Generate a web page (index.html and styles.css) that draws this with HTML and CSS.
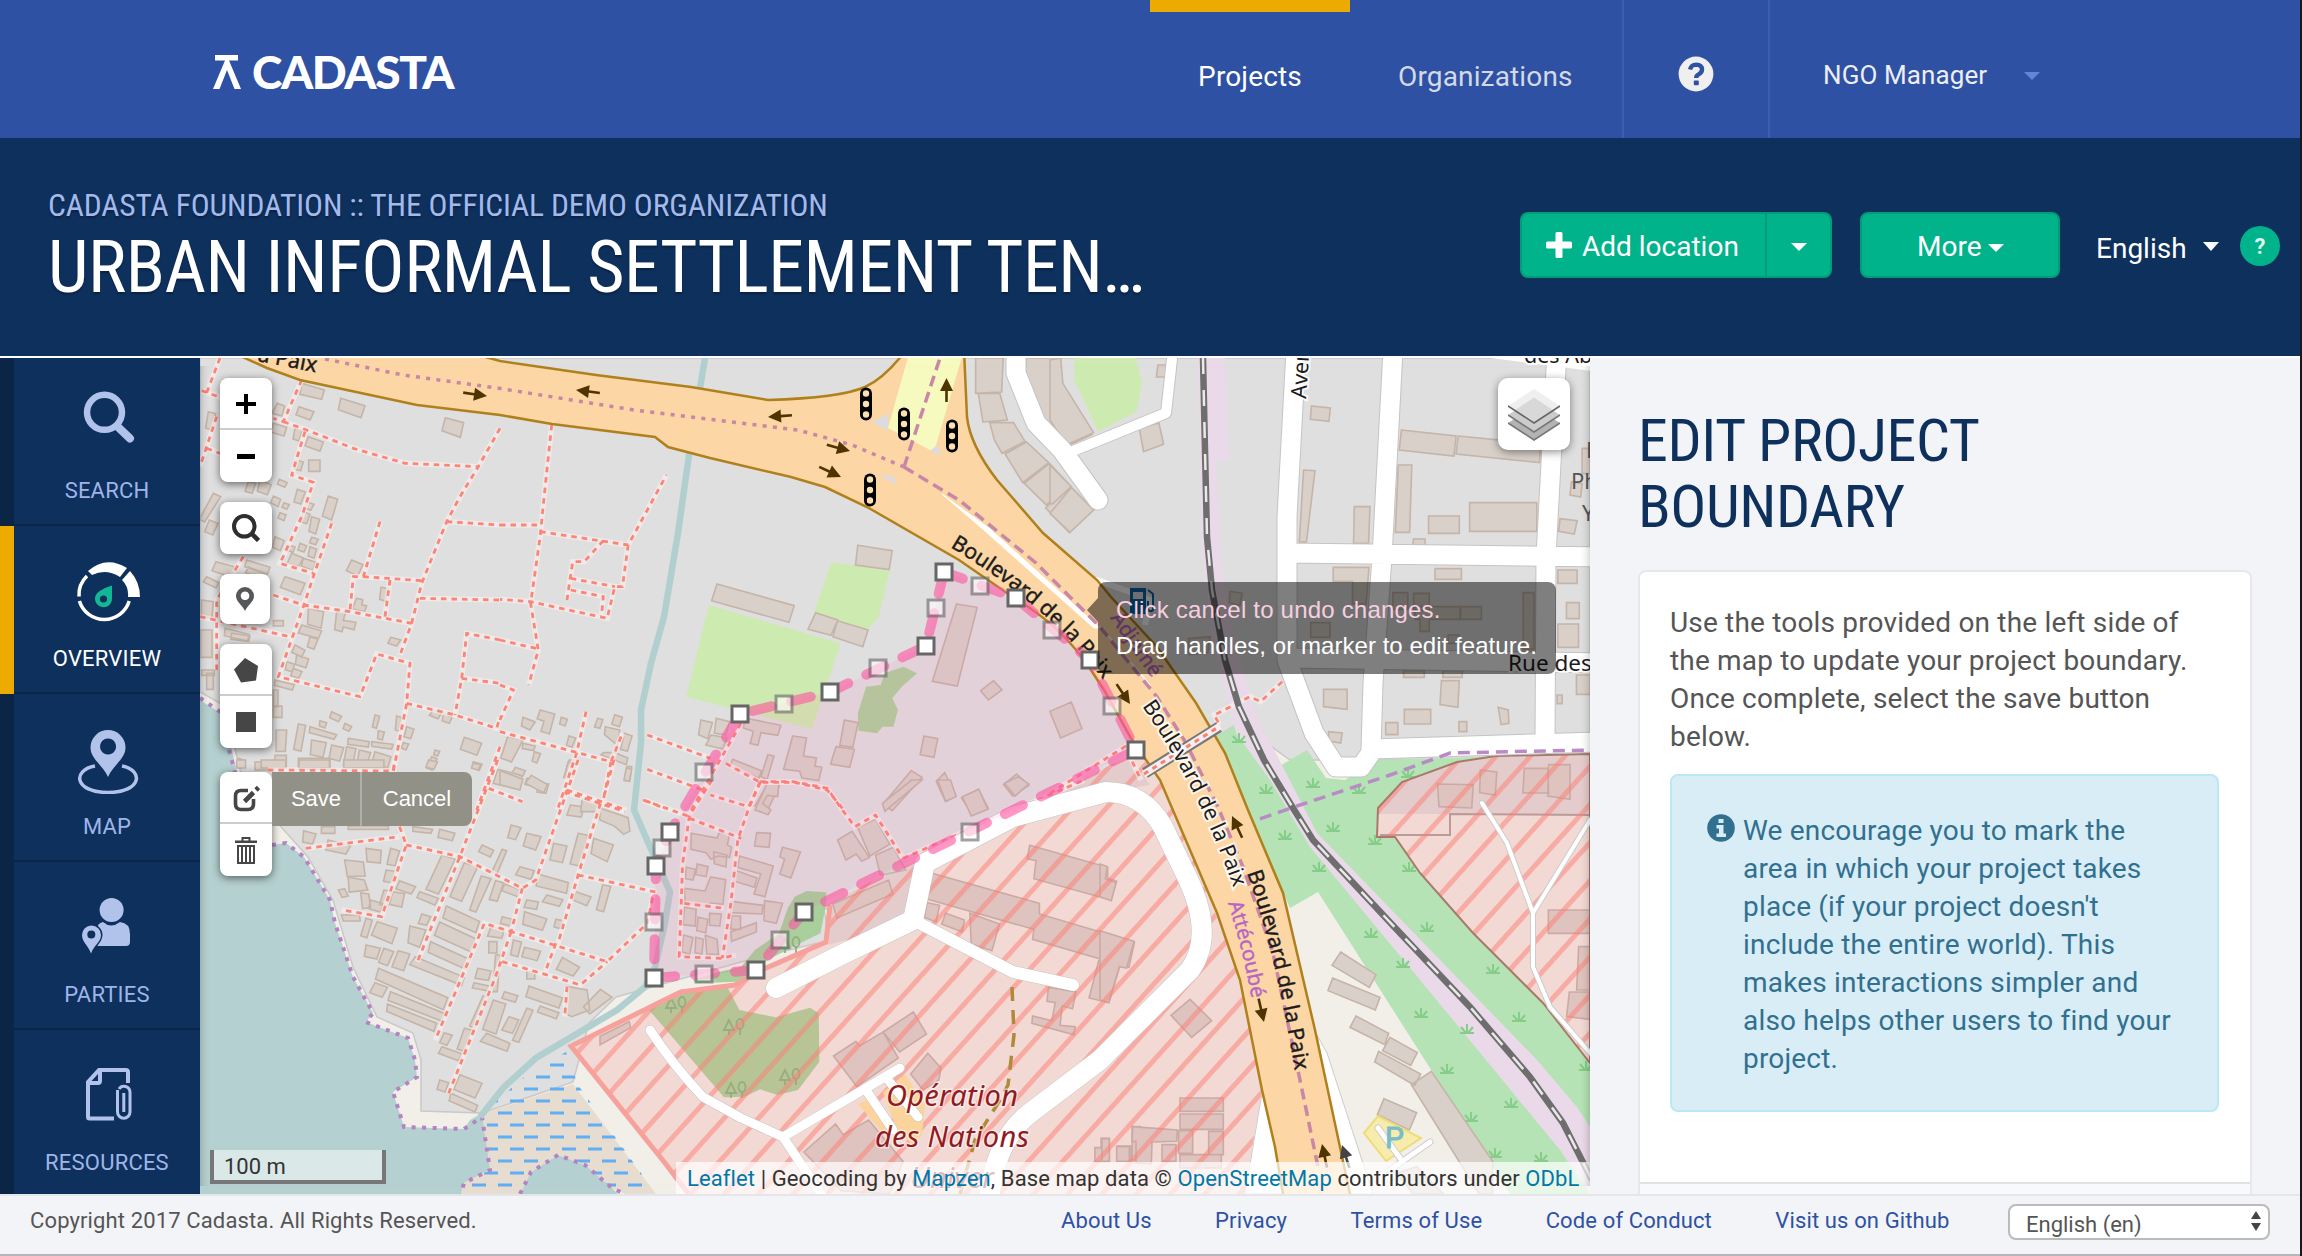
FILE: index.html
```html
<!DOCTYPE html>
<html lang="en">
<head>
<meta charset="utf-8">
<title>Cadasta – Edit project boundary</title>
<link rel="stylesheet" href="styles.css">
</head>
<body>
<div class="app">
<header class="topbar">
  <a class="logo"><svg class="logo-mark" viewBox="0 0 28 34" width="28" height="34"><path d="M2 0H25V5.4H2zM12 5.4H16L28 34H21.5L14 15 6.5 34H0z" fill="#fff"/></svg><span>CADASTA</span></a>
  <nav class="mainnav">
    <a class="tab active">Projects</a>
    <a class="tab orgs">Organizations</a>
    <a class="help"><svg viewBox="0 0 36 36" width="36" height="36"><circle cx="18" cy="18" r="17.4" fill="#efefef"/><path d="M12 13.6Q13.2 8.6 18.2 8.6 24 8.8 24 13.6 24 16.6 20.6 18.4 18.2 19.6 18.2 22" fill="none" stroke="#2e51a3" stroke-width="4.4"/><rect x="15.8" y="24.4" width="5" height="4.8" rx="1" fill="#2e51a3"/></svg></a>
    <a class="user">NGO Manager<i class="caret pale"></i></a>
  </nav>
</header>
<section class="titlebar">
  <div class="titles"><div class="org">CADASTA FOUNDATION :: THE OFFICIAL DEMO ORGANIZATION</div><h1>URBAN INFORMAL SETTLEMENT TEN…</h1></div>
  <div class="btn split"><span class="main"><svg viewBox="0 0 26 26" width="26" height="26"><path d="M9.5 1.5q0-1.5 1.5-1.500h4q1.500 0 1.500 1.500v8h8q1.500 0 1.500 1.500v4q0 1.500-1.500 1.500h-8v8q0 1.500-1.500 1.500h-4q-1.500 0-1.500-1.500v-8h-8q-1.500 0-1.500-1.500v-4q0-1.500 1.500-1.500h8z" fill="#fff"/></svg><em>Add location</em></span><span class="drop"><i class="caret"></i></span></div>
  <div class="btn more"><em>More</em><i class="caret"></i></div>
  <div class="lang">English<i class="caret"></i></div>
  <div class="qmark">?</div>
</section>
<main class="body">
  <nav class="side">
    <a class="item"><svg viewBox="0 0 70 70" width="70" height="70" fill="none" stroke="#b1c3ea"><circle cx="32.500" cy="24.300" r="17.500" stroke-width="6.500"/><path d="M45.500 38.500L58 50.500" stroke-width="8" stroke-linecap="round"/></svg><span>SEARCH</span></a>
    <a class="item on"><svg viewBox="0 0 70 70" width="70" height="70"><g fill="none" stroke="#fff" stroke-width="3.500"><path d="M57.200 45A26 26 0 0 1 7.400 45M7 40.500A26 26 0 0 1 15 20"/></g><path d="M16 15Q34-1 55 12L48 21Q34 12 20 19ZM58 15Q68 26 68 41L56 41Q57 31 50 24Z" fill="#fff"/><path d="M40 29.500V43a8.500 8.500 0 1 1-13-7.500Q34 31 40 29.500Z" fill="#12b893"/><circle cx="31.500" cy="43" r="3.600" fill="#0e305d"/></svg><span>OVERVIEW</span></a>
    <a class="item"><svg viewBox="0 0 70 70" width="70" height="70"><path fill-rule="evenodd" d="M36 53C31 41 18.500 35 18.500 23.500a17.500 17.500 0 0 1 35 0C53.500 35 41 41 36 53zM36 14.500a8 8 0 1 0 .1 0z" fill="#b1c3ea"/><path d="M23 42C0 46 2 68.500 36 68.500S72 46 50 42" fill="none" stroke="#b1c3ea" stroke-width="3.500"/></svg><span>MAP</span></a>
    <a class="item"><svg viewBox="0 0 70 70" width="70" height="70"><circle cx="39.600" cy="18" r="12" fill="#b1c3ea"/><path d="M25 54V38Q25 31 31 30Q39 37 48 30Q58 31 58 42V50Q58 54 54 54Z" fill="#b1c3ea"/><path fill-rule="evenodd" stroke="#0e305d" stroke-width="3" paint-order="stroke" d="M19 61.500C16 53 10 50 10 43a9.500 9.500 0 0 1 19 0C29 50 22 53 19 61.500z" fill="#b1c3ea"/><circle cx="19.300" cy="42.500" r="4" fill="#0e305d"/></svg><span>PARTIES</span></a>
    <a class="item"><svg viewBox="0 0 70 70" width="70" height="70" fill="none" stroke="#b1c3ea" stroke-width="4"><path d="M42 58.500H17.500Q16 58.500 16 57V22L27 10H53.500Q56 10 56 12V23M16 23H26Q28 23 28 21V10"/><path d="M45.500 30V52a5 5 0 0 0 12.500 0V32a6 6 0 0 0-11-3M51.800 33V52" stroke-width="3"/></svg><span>RESOURCES</span></a>
  </nav>
  <div class="map">
  <svg class="tiles" viewBox="200 358 1390 836" width="1390" height="836">
    <defs>
      <pattern id="hatch" width="25.500" height="25.500" patternUnits="userSpaceOnUse" patternTransform="translate(12 0) rotate(42)"><rect width="5" height="26" fill="#fb8078" opacity=".52"/></pattern>
      <pattern id="marsh" width="26" height="24" patternUnits="userSpaceOnUse" patternTransform="translate(4 6)"><path d="M0 3H14M12 15H26" stroke="#62aef2" stroke-width="2.800"/></pattern>
      <g id="signal"><rect x="-6" y="-16.500" width="12" height="33" rx="6"/><g fill="#fce0b4"><circle cy="-10.500" r="3.200"/><circle r="3.200"/><circle cy="10.500" r="3.200"/></g></g>
      <path id="arrow" d="M0 0L-13-6.500V-1.300H-24V1.300H-13V6.500Z"/>
      <path id="tuft" d="M-7 4H7M0 4V-5M-1 4L-6-2M1 4L6-2" fill="none" stroke="#86cd89" stroke-width="2"/>
      <g id="trees" fill="none" stroke="#97ac80" stroke-width="1.800"><path d="M-5 8V2M-5-7L-10 3H0ZM6 8V1"/><ellipse cx="6" cy="-3" rx="3.500" ry="5"/></g>
      <path id="b1" d="M950 547Q1050 606 1106 684"/><path id="b2" d="M1142 706Q1200 790 1235 892"/><path id="b3" d="M1247 873Q1278 960 1296 1078"/>
      <path id="b4" d="M1228 903Q1243 950 1252 1000"/><path id="b5" d="M1110 618L1153 680"/>
      <g id="paths"><g class="c3"><path d="M660 24L620 128M605 122L660 142M650 200L600 350M620 295L660 310M905 90L850 215 820 205M850 215L920 240 1060 295 1215 340 1435 350M915 245L875 375 940 397 905 500 840 640 940 670M1500 235L1435 350 1380 440 1340 515 1265 700 1235 820 1200 915M1340 515L1500 525M1140 515L1090 680 1060 680 1050 780M1090 680L1265 692M1170 690L1155 800M995 520L940 680 910 770 835 980 1080 1040 1130 912 1230 940 1220 1060 1180 1265M820 735L910 765 1050 785 1235 820M1260 745L1500 750M1500 870L1400 850 1385 985 1365 1095M1385 985L1500 1000M1220 1060L1365 1095 1490 1135 1500 1100M730 620L650 750V960M600 800L870 860M1500 1190L1430 1380"/></g>
      <g class="c4"><path d="M1115 0L1030 290 935 605M600 30L880 33 885 0M685 265L895 230M895 200L910 255 855 470 765 450M910 255L1030 290 1170 385 1200 360 1295 0M1170 385L1145 515 1085 490 975 840M1145 515L1110 650 1005 1000M1375 0L1355 100M1265 95L1400 155M1345 130L1295 345 1250 550M1295 345L1465 395 1450 490 1360 605 1145 515M1125 605L1300 675 1360 605M1245 550L1220 640M1270 680L1265 770M1095 85L1170 125"/></g>
      <g class="c5"><path d="M135 225L110 500 105 560 80 760 100 900 75 1005M0 525H105M105 545L335 585 435 375M335 585L320 710 300 710 280 805 80 755 0 748M270 572L220 635 190 635 175 750M185 685L300 710M185 720L270 740 265 800M0 870L100 897M0 1005L35 1020 0 1110M0 1145L290 1235 320 1150M225 1085L200 1210 150 1380M290 1235L270 1350M385 1155L550 1225M385 1258L530 1320M380 1352L430 1375M630 1120L500 1380M590 1240L680 1297 770 1297 855 1320 895 1375M680 1297L650 1370 550 1335M175 1320L330 1380"/></g>
      <g class="c7"><path d="M325 0L260 105 240 250 230 530 350 535 395 525M260 115L410 175M465 5L430 90 400 180 380 370 355 535M465 5L560 5 660 25 700 85 740 140 800 105 880 235M245 370L360 385M880 235L1405 0M125 60L260 110"/></g>
      <g class="c6"><path d="M0 1330L210 1190 255 1290M650 995L590 1055 560 1040 460 1095 475 1125"/></g></g>
    </defs>
    <rect x="200" y="358" width="1390" height="836" fill="#f2efe9"/>
    <path d="M200 358H1590V760H1290L1239 723 1214 738 1160 785 1127 760 824 910 830 940 741 962 652 987 616 997 589 1023 573 1082 482 1113 421 1111V1060L413 1033 377 1017 353 967 333 900 308 857 275 820 240 770 225 706 200 692Z" fill="#dfdfdf" stroke="#c9c9c9" stroke-width="1.500"/>
    <path d="M200 700L222 714 232 750 240 790 250 835 272 845 286 843 304 857 330 900 335 923 353 977 373 1013 366 1022 408 1038 415 1060 417 1077 393 1092 404 1127 464 1129 470 1120 484 1112 488 1130 490 1170 464 1183 461 1194H200Z" fill="#b5d0d0"/>
    <path d="M482 1114L573 1084 656 1194H625L612 1188 585 1165 558 1155 531 1172 520 1194H461L464 1183 490 1170Z" fill="#e6dcd0"/>
    <path d="M520 1194L531 1172 558 1155 585 1165 612 1188 618 1194Z" fill="#b5d0d0"/>
    <path d="M566 1052L578 1085 656 1194H618L585 1165 558 1152 531 1170 520 1194H461L464 1183 490 1170 486 1110 530 1072Z" fill="url(#marsh)"/>
    <path d="M200 698L222 713M229 750L240 790M272 845L286 843 304 857 330 900 335 923 353 977 373 1013 366 1022 408 1038 415 1060 417 1077 393 1092 404 1127 464 1129 482 1117 490 1170 464 1183 461 1194M520 1194L531 1172 558 1155 585 1165 612 1188 625 1194" fill="none" stroke="#b583c3" stroke-width="4" stroke-dasharray="4 6.500"/>
    <!-- scrub and rail corridor -->
    <path d="M1214 738L1239 723 1278 767 1307 750 1326 778 1345 780 1378 760 1590 754V1194H1510L1318 892 1290 908 1235 780Z" fill="#b5e3b5"/>
    <path d="M1198 358H1225L1230 460H1216L1220 550 1232 633 1257 717 1300 800 1317 833 1537 1060 1577 1107 1590 1127V1194L1560 1150 1500 1077 1420 980 1310 847 1270 780 1236 733 1211 633 1202 550Z" fill="#ead9e8"/>
    <g><use href="#tuft" x="1239" y="738"/><use href="#tuft" x="1313" y="783"/><use href="#tuft" x="1266" y="789"/><use href="#tuft" x="1359" y="789"/><use href="#tuft" x="1408" y="773"/><use href="#tuft" x="1285" y="835"/><use href="#tuft" x="1333" y="827"/><use href="#tuft" x="1375" y="840"/><use href="#tuft" x="1319" y="867"/><use href="#tuft" x="1409" y="867"/><use href="#tuft" x="1371" y="933"/><use href="#tuft" x="1427" y="927"/><use href="#tuft" x="1403" y="963"/><use href="#tuft" x="1493" y="969"/><use href="#tuft" x="1421" y="1013"/><use href="#tuft" x="1519" y="1017"/><use href="#tuft" x="1467" y="1029"/><use href="#tuft" x="1447" y="1069"/><use href="#tuft" x="1511" y="1103"/><use href="#tuft" x="1471" y="1117"/><use href="#tuft" x="1495" y="1153"/><use href="#tuft" x="1541" y="1157"/><use href="#tuft" x="1586" y="1066"/></g>
    <!-- parks -->
    <g class="c5" fill="#cdebb0"><path d="M545 765L890 880 815 1137 487 1040Z"/><path d="M865 637L1018 660 990 800 960 838 820 790Z"/><path fill="#add19e" d="M957 1010L995 1005 1005 970 1055 950 1090 970 1050 1010 1025 1045 1040 1080 1028 1130 1000 1130 985 1150 937 1142 935 1090Z"/></g>
    <path class="c6" fill="#cdebb0" d="M68 0H235L258 100 242 185 135 245 68 90Z"/>
    <!-- restricted areas -->
    <path d="M569 1045L679 990 734 983 762 967 824 940 829 903 896 868 1127 757 1132 745 1160 780 1213 907 1240 980 1262 1090 1250 1160 1245 1194H690L665 1163Z" fill="#f3d9d4"/>
    <path d="M829 903L1127 757 1140 770 1150 785 1106 792 1013 817 925 863 913 920 829 945Z" fill="#e5cccc"/>
    <path d="M1377 837L1378 808 1402 782 1457 762 1496 756 1590 754V1063L1543 1003 1473 933 1420 873 1395 837Z" fill="#f3d9d4"/>
    <path d="M1378 814V808L1402 782 1457 762 1496 756 1590 754V814Z" fill="#e5cccc"/><path d="M1380 835H1450V814L1590 815" stroke="#bb9a98" stroke-width="2" fill="none"/>
    <g class="c7"><path fill="#a8cf9c" d="M565 350L600 333 657 337 655 380 640 460 540 510 480 545 450 570 400 605 280 610 270 600 330 580 410 560 450 510 520 460 545 385Z"/><path fill="#b7c496" d="M140 687L240 628 370 622 405 690 510 712 610 683 635 700 637 845 575 930 515 945 465 928 420 950 360 952Z"/></g>
    <use href="#trees" x="676" y="1005"/><use href="#trees" x="734" y="1027"/><use href="#trees" x="790" y="1077"/><use href="#trees" x="790" y="945"/><use href="#trees" x="736" y="1090"/>
    <!-- buildings -->
    <g class="bld">
    <g class="c3"><path d="M905 100l68 20-8 28-65-15zM1022 145l73 22-12 36-68-24zM1336 203l55 15-10 44-55-20zM897 170l45 15-12 25-42-16zM832 160l22 8-8 30-30-8zM925 260l45 16-10 28-45-17zM926 330h34v34h-34zM985 438l28 10-18 62-28-12zM888 330l22 6-8 26-20-5zM820 220l40 12-8 26-40-12zM885 235l22 6-10 32-18-6zM625 185l22 6-16 48-14-5zM640 430l22 10-48 76-16-8zM628 510l26 10-16 35-24-10zM780 390l34 14-12 30-30-10zM745 395l22 5-10 30-22-6zM838 388l24 10-8 14-22-10zM820 438l22 10-8 22-22-12zM852 458l16 6-8 14-14-6zM840 488l18 6-6 18-18-8zM892 418l24 8-14 36-20-6zM918 455l24 8-10 18-16-6zM910 485l20 8-10 28-18-6zM935 500l24 8-12 44-20-8zM935 562l20 6-8 16-18-6zM900 580l20 8-8 18-18-6zM865 585l20 6-6 16-18-6zM875 610l35 14-14 26-34-10zM910 625l38 12-10 24-34-12zM930 590l20 8-8 26-18-6zM648 635l55 15-12 30-55-18zM620 680l36 18-8 16-38-18zM740 630l70 22-8 20-68-22zM745 650l50 22-10 16-48-20zM855 680l60 20-14 34-60-22zM735 690l55 22-6 18-56-22zM825 560l28 12-12 30-24-10zM604 750l36 5-4 48h-32zM602 840h34v82h-34zM675 835l72 18-4 20-70-16zM605 960h38v16h-38zM620 970h20v48h-20zM1055 630l34 14-16 34-34-16zM1070 745l18 4-2 16 14 2-6 18-38-8zM1143 712l22 4-8 38-18-6zM1010 785l26 4-6 22 38 6-6 22-32-8-4 14-22-6zM1172 862l30 8-12 18-26-8zM925 775l46 10-8 50-40-12zM905 825l60 18-10 22-60-16zM930 860l24 8-12 30-20-8zM885 885l30 16-10 20-30-14zM890 915l36 12-8 26-32-10zM860 935l24 8-8 22-20-6zM880 955l26 10-10 20-24-8zM825 990l58 14-6 16-54-14zM820 1020h14v50h-14zM820 1068h26v34h-26zM828 1140h32l-4 64h-28zM895 1122l22 4-14 78-22-6zM935 1170l44 8-10 44-38-8zM995 1185l36 8-12 40-32-8zM1040 1190l28 6-12 58-26-10zM1078 1200l34 8-16 48-26-8zM1125 1205l48 15-10 34-48-14zM825 1216h34v36h-34zM895 1225h95v32h-95zM765 1236h50v24h-50zM930 1130l80 24-8 14-74-20zM960 1112l20 6-6 16-16-6zM995 1085l30 14-10 16-26-12zM1035 1120l20 10-8 14-18-8zM1125 1095l14 4-10 36-12-4zM1045 1165l62 10-2 16-62-8zM1115 1175l64 8-4 14-60-8zM1190 1098l14 4-4 42-14-4zM1135 1142l18 4-6 24-14-4zM1220 1130l22 8-10 28-20-6zM1210 1178l16 4-8 18-14-6zM1300 1080l24 10-10 16-26-10zM1332 1090l24 12-8 18-22-8zM1393 1162l52 18-14 36-50-18zM1420 1235l26 8-8 18-22-8zM1305 1200l14 4-6 14-12-4zM1295 1220l16 6-14 34-16-6zM715 1225l18 6-10 24-14-6zM820 812h30v16h-30zM695 850l55 8-4 16-54-6z"/></g>
    <g class="c4"><path d="M670 0h68v24h-68zM770 0h90v24h-90zM585 0h55v24h-55zM530 0h20v24h-20zM960 0l20 6-8 22-18-6zM1060 10l18 4-8 16-14-6zM1115 28l54 18-6 42-58-18zM1180 55l30 8-8 18-26-8zM1205 68l24 4-6 28-20-4zM1275 0h16l-8 52h-20zM1405 20h10l-4 42h-12zM1278 135l30 6-6 30-32-6zM1345 145l62 28 4 40-14 10-20-24-34-20zM1145 195l22 8-12 36-18-6zM1180 220l32 10-12 40-28-12zM1240 250l30 8-10 50-28-8zM1295 220l22 6-18 92-22-6zM1330 235l44 20-14 50-36-24zM985 208l34 12-6 22-32-10zM680 212l28 10-8 30-22-6zM720 200h30v20h-30zM780 198h90v10h-90zM1080 255l26 16-8 20-26-16zM1125 268l10 4-22 70-12-4zM735 240l50 18-10 24-45-12zM820 265l34 6-2 38-30-4zM875 265l20 8-10 44-18-4zM772 300l42 6 4 42-40 2zM780 352l36 8 8 30-42 6zM758 390l14-4 8 22-14 4zM865 330l20 4-8 34-18-4zM895 362l36 18-10 22-34-16zM880 395l26 6-6 40-28-8zM860 390l16 4-8 44-18-4zM830 420l30 12-8 24-26-10zM808 398l18 4 4 40-18 4zM990 285l30 12-38 105-28-14zM1040 308l30 12-36 104-26-14zM1078 348l22 8-34 100-14-6zM1110 362l18 6-14 56-18-6zM1130 372l38 18-8 20-36-18zM940 395l42 20-8 20-40-22zM1165 320l32 12-8 26-34-14zM1205 342l68 26-4 32-68-22zM1290 395l34 16-10 26-32-18zM1350 375l18 4-16 76-16-6zM1225 405l36 14-8 20-38-14zM1180 420l26 6-4 22-28-6zM1175 455l50 22-10 34-44-18zM1245 478l16 4-6 24-14-6zM945 462l20 8-10 26-18-6zM1125 470l22 8-4 20-22-8zM765 465h40l2 18h-38zM820 475l14 6-12 52-14-6zM845 485l45 20-12 46-46-26zM918 498l36 12-14 52-26-14zM820 555l32 10-8 32-28-8zM860 565l22 10-14 42-20-10zM892 572l26 10-14 50-26-12zM1000 438l74 46-8 34-74-44zM985 486l80 50-10 40-82-50zM965 545l88 54-8 30-86-52zM930 590l110 62-6 24-116-62zM848 625l155 88-10 36-152-92zM840 668l28 14-12 30-28-14zM875 695l122 66-8 22-120-62zM868 732l110 58-6 24-106-60zM1100 500l30 8-6 26-32-6zM1095 545h18v34h-18zM1150 540l18 6-8 44-16-6zM1175 562l36 12-8 28-34-12zM1260 592l38 30-14 26-38-20zM1070 625l30 8-6 28-30-6zM1110 585h10l-6 110h-10zM1062 668l40 12-4 14-40-10zM1180 635h18v22h-18zM1130 695l30 12-6 20-30-12zM1185 678l75 36-8 30-74-34zM1210 738l42 20-6 18-42-20zM1082 708l14 6-32 90-12-6zM1105 720l28 12-22 90-30-14zM1180 745l14 6-32 96-14-6zM1140 770l22 10-14 40-24-10zM1275 680l40 10 6 60-40 20-16-10zM1345 688l26 24-50 50-14-22zM1090 820l52 30-6 24-60-30zM1040 805l18 6-20 62-14-6zM995 818l18 8-12 30-16-8zM990 860l45 22-8 20-45-22zM1030 944l50 26-16 44-48-26zM985 960l20 8-8 28-18-8zM1010 1000l60 36-6 20-58-34zM925 200l44 8-4 12-40-6z"/></g>
    <g class="c5"><path d="M567 702l202 65-14 50-202-65zM935 586l90 16-8 57-88-14zM825 788l58 22-18 46-60-18zM882 812l80 28-14 50-78-30zM1193 762l54 10-52 236-65-14zM1290 992l22 28-36 30-20-28zM1493 1056l28 80-56 28-28-80zM1243 24h72l-4 102-68 4zM1250 130h56l20 80-64 6zM1280 218h62l30 56-60 36-20-40zM1320 312l56-36 58 62-68 60zM1370 400l66-60 48 60-56 65zM1484 412l68 66-64 70-62-74zM1375 24h90l0 80 82 150-72 38-58-58-48-110zM525 1110l30 8-12 48-24-12zM565 1105l35 10-10 40-30-6zM552 1155l40 8-8 34-46-12zM640 1104l94 22-8 30-44-8-8 38-20-6 8-36-26-10zM900 1110l36 8-14 74-34-6zM878 1190l48 8-12 54-50-10zM765 1158l36 6-8 54 34 6-4 24 18 4-8 40-44-8-6-20-42-6zM608 1228l75 34-6 22-76-34zM700 1214l16 4-18 70-16-8zM1108 1158l36 8-10 56-36-8zM1075 1262l28 20-78 100-24-20zM1162 1268l30 70-28 16-24-60zM1350 1272l32 34-42 32-24-34zM1250 1318l26 56-40 20-30-50zM700 1300l30 8-34 80-30-20zM60 1102l32 14-14 24-22-12zM105 1080l38 12-14 60-22-8 8-30-18-8zM160 1102l16 6-6 20-14-6zM255 1105l14 4-8 26-14-4zM300 1094l20 8-8 28-20-8zM275 1130l38 10-6 46-34-32zM325 1150l20 8-12 46-18-6zM180 1158l18 6-10 28-14-6zM20 1160l40 10-30 66-28-12zM60 1180l32 8-4 14-30-6zM90 1205l16 6-10 28-12-6zM270 1208h30l34 16-4 20-66-30zM178 1236l14 4-10 48-14-6zM330 1254l14 4-6 36-14-4zM40 1252l26 10-6 16-28-10zM0 1262l60 26-8 32-52-16zM82 1276l42 28-10 24-48-28zM215 1345l50 20-4 20h-50z"/></g>
    <g class="c6"><path d="M0 30L30 24 36 100 122 248 45 285 0 210zM0 345L60 410 6 462 0 460zM60 412L122 480 56 547 0 490zM302 45h26v36h-30zM250 235l55-16 13 64-56 22zM732 168l53 6-4 40-52-6zM710 360l32 2-24 214h-20zM852 470h44l-4 110h-42zM984 240l153 18-6 60-153-18zM1143 258l230 24-2 56-234-26zM975 345h38l-6 202h-40zM1060 498h86v52h-86zM1018 567h32v18h-34zM1175 458h188v86h-188zM1428 506l48 6-8 40-44-8zM1490 295h22v76h-22zM1460 395l30 6-4 40-30-6zM793 652h100l-8 110h-38v-68h-54zM1078 656h74v32h-74zM1422 660h54v40h-54zM1446 758h36v48h-36zM1422 822h58v70h-58zM1325 728h30v170h-30zM960 728h42v50h-42zM1018 730h44v50h-44zM1022 770h126v38h-86v36h-26v-36h-14zM1150 770h58v38h-58zM730 818h54v44h-54zM504 724l34 6-6 36-30-8zM388 866l60-6-6 48-52 6zM1115 855h30v25h-30zM990 962h58v20h-58zM1100 962h54v20h-54zM1474 975h38v58h-38zM1096 992h50l-4 80-50-8zM766 1018h66v60l-66-8zM992 1078h74v44h-74zM1255 1072l28 8 2 40-22 4zM1145 1115h22v30h-22zM780 1145l38 4-4 30-34-6zM940 1118h34v36h-34zM1420 1035h14v26h-14z"/></g>
    <g class="c6 rb"><path d="M1205 1260l46 6-4 70-44-8zM1328 1255h66l2 74h-72zM1396 1244h60v104l-62-10zM1085 1302l100 2-4 70-92-4z"/></g>
    <g class="c7"><path d="M265 160l75 14 6-16 30 6-6 30 12 8-6 30-34-4-20 10-14-20-44-10zM250 262l28 6-8 32-22-4zM282 252l32 8-6 30-30-6zM330 215l38 10-2 36-34-10zM245 325l60 8 16-42 44 8-8 74-36-4-6 12-68-14zM245 382l34 6-2 50-36-4zM285 412l28 6-6 40-26-6zM318 400l34 2-4 36-30-2zM242 465l28 8-10 50-22-8zM278 472l22 6-4 44-20-4zM306 466l34 12 4 46-34-2zM455 158l40 2-4 42-42-4zM405 228l98 30-24 92-32-8 20-60-68-20zM390 270l66 24-8 28-62-20zM530 202l52 14-28 78-32-12 14-44-14-8zM478 362l52 8-18 60-36-8zM380 364l94 12-4 26-90-4zM382 408h26v40h-28zM380 456l74-28v28l-72 28zM748 142l52-24 42 74-58 36zM690 180l42-26 50 78-22 12-16-22-30 18zM800 226l52-24 36 68-74 16zM450 90l40-90h30l-4 50-30-4-14 24 24 20-8 14zM820 70l85-70h30l-108 94zM980 0h38l16 50-30 14zM1052 50l48-22 26 60-48 20zM1175 10l40-20 30 22-40 36z"/></g>
    <g class="c7 rb"><path d="M676 372l162-72 12 42-162 72zM1248 196l226 66 0 32 26 10-16 56-224-64 6-54-26-6zM964 280l312 90v32l276 84-16 76-280-84 4-30-314-92zM950 368l36 8-10 50-34-14zM1004 400l54 20-6 36-60-24zM1074 400l86 32-22 80-60-20zM1448 542l62 14-32 112-58-14zM1302 622l80 14-10 50-30-8-6 58 44 4-4 24-122-34 2-22 56 14 10-54-24-4zM910 696l38 66-78 54-48-60zM822 756l44 78-120 86-68-92 65-44 10 14zM952 820l38 44-6 36-46 30-36-48zM780 1020l100 124-40 98-140-10-108-116 92-84 22 32zM85 725l4 18-89 52v-26zM1545 1040h23v100h-23zM1455 1075h24v70h-42v-42h18zM1502 1098h40v44h-40z"/></g>
    <g class="c8 rb"><path d="M0 252l22 8-6 36 32 12-14 54-34-12zM0 452l102 32-22 80-22-4-32 108-26-8zM270 658l65 64-60 50-62-66zM240 954h130v40h-130zM240 1002h130v46h-130zM98 1040l134 10-2 34-74 2-2 66-46-4v-64h-12zM236 1052h42v68h-42zM186 1094h42v50h-42zM326 1054h44v70h-44zM50 1100h38v44h-38zM240 1124h124v40h-124zM6 1076h22v68h-22zM1345 390h125v70h-125zM1436 500h34v130h-40zM1408 636h62v82l-70-8z"/></g>
    <g class="c8"><path d="M722 516l106 68-20 38-112-66zM698 594l142 58-14 38-142-58zM768 708l98 52-12 34-104-52zM870 772l82 46-20 38-84-44zM836 814l126 68-18 34-120-70zM934 914l60-40 184 270v98h-40zM852 956l98 42-22 52-96-46zM890 1180l60-20 80 82h-90z"/></g>
    </g>
    <path d="M569 1045L679 990 734 983 762 967 824 940 829 903 896 868 1127 757 1132 745 1160 780 1213 907 1240 980 1262 1090 1250 1160 1245 1194H690L665 1163Z" fill="url(#hatch)"/>
    <path d="M1377 837L1378 808 1402 782 1457 762 1496 756 1590 754V1063L1543 1003 1473 933 1420 873 1395 837Z" fill="url(#hatch)" stroke="#a87a6a" stroke-width="2"/>
    <path d="M690 1196L665 1163 571 1046 681 992 735 985 764 969 826 942 830 905" fill="none" stroke="#f6a19c" stroke-width="5"/>
    <!-- creek -->
    <path d="M705 358L689 455 678 533 664 617 651 663 641 710V743L634 810 647 840 670 892 665 923 655 967 645 987 617 1010 536 1058 504 1087 480 1117" fill="none" stroke="#b1cfcf" stroke-width="6.500"/>
    <!-- footpaths -->
    <use href="#paths" class="foot"/>
    <use href="#paths" class="foot-dots"/>
    <path d="M1012 987L1014 1035 1008 1085 1000 1100 975 1140 960 1194" fill="none" stroke="#b08a3a" stroke-width="3.500" stroke-dasharray="14 9"/>
    <path d="M883 1092L905 1074 925 1105 922 1135 912 1145 895 1125ZM858 1104L872 1098 890 1125 885 1135Z" fill="#fbd49c"/>
    <!-- streets -->
    <g class="street casing"><path style="stroke-width:21px" d="M1016 350V373L1036 423 1062 450 1098 500M1296 350L1287 517V660L1314 733 1336 767H1361L1375 747M1393 350L1382 557 1373 683 1371 750M1557 350L1546 557 1545 743M1288 553L1600 557M1289 658L1600 663M1371 749L1600 742"/><path style="stroke-width:12px" d="M1068 453L1166 413 1173 350"/><path style="stroke-width:21px" d="M776 988L841 955 913 920 925 863 1013 817 1106 792Q1143 792 1163 827L1187 877Q1215 935 1190 970L1100 1060 1030 1113Q995 1140 989 1200"/><path style="stroke-width:13px" d="M913 920L1013 972 1073 985"/><path style="stroke-width:10px" d="M650 1030Q672 1064 703 1097L741 1118 783 1137 825 1200M783 1137L900 1068M866 1090L893 1130M888 1080L918 1117"/></g>
    <g class="street"><path style="stroke-width:19px" d="M1016 350V373L1036 423 1062 450 1098 500M1296 350L1287 517V660L1314 733 1336 767H1361L1375 747M1393 350L1382 557 1373 683 1371 750M1557 350L1546 557 1545 743M1288 553L1600 557M1289 658L1600 663M1371 749L1600 742"/><path style="stroke-width:10px" d="M1068 453L1166 413 1173 350"/><path style="stroke-width:20px" d="M776 988L841 955 913 920 925 863 1013 817 1106 792Q1143 792 1163 827L1187 877Q1215 935 1190 970L1100 1060 1030 1113Q995 1140 989 1200"/><path style="stroke-width:12px" d="M913 920L1013 972 1073 985"/><path style="stroke-width:9px" d="M650 1030Q672 1064 703 1097L741 1118 783 1137 825 1200M783 1137L900 1068M866 1090L893 1130M888 1080L918 1117"/></g>
    <path d="M1475 350L1600 366" stroke="#fff" stroke-width="12"/>
    <path d="M1070 583L1097 580 1130 592 1150 600 1145 625" fill="none" stroke="#fff" stroke-width="6"/>
    <g class="street"><path style="stroke:#ccc;stroke-width:6px" d="M1482 803L1507 843 1533 913V967L1550 1007 1590 1053M1533 913L1590 820"/><path style="stroke-width:4px" d="M1482 803L1507 843 1533 913V967L1550 1007 1590 1053M1533 913L1590 820"/></g>
    <path d="M1262 1093L1275 1147 1283 1194H1245ZM1317 1035L1327 1053 1373 1194H1348Z" fill="#fff" stroke="#ccc"/>
    <path d="M1364 1133L1378 1116 1421 1138 1386 1161Z" fill="#f7ecae" stroke="#efdc75" stroke-width="2"/><g class="street"><path style="stroke:#ccc;stroke-width:7px" d="M1378 1128L1400 1158M1430 1142L1390 1170"/><path style="stroke-width:5px" d="M1378 1128L1400 1158M1430 1142L1390 1170"/></g><text x="1385" y="1148" font-size="30" fill="#79bdc9" stroke="#79bdc9">P</text>
    <!-- railway and parish limits -->
    <g fill="none"><path d="M1203 358L1205 450 1207 537 1212 590 1225 660 1239 707 1264 760 1293 808 1313 840 1400 933 1470 1007 1530 1077 1563 1123 1592 1180" stroke="#6e6e6e" stroke-width="6.500"/><path d="M1203 358L1205 450 1207 537 1212 590 1225 660 1239 707 1264 760 1293 808 1313 840 1400 933 1470 1007 1530 1077 1563 1123 1592 1180" stroke="#e9e9e9" stroke-width="2.500" stroke-dasharray="16 16"/>
    <path d="M1242 825L1300 805 1390 775 1450 753 1590 750" stroke="#b98bc6" stroke-width="3.500" stroke-dasharray="12 7"/></g>
    <!-- boulevard -->
    <path d="M240 350H460L500 361 596 375 691 387 768 400Q840 398 865 387 885 378 906 350H964L967 417Q970 445 997 480L1043 533 1097 580 1111 597 1157 647 1196 703 1225 753 1248 810 1283 893 1315 1030 1350 1194 1352 1200H1284L1275 1147 1262 1090 1240 980 1217 913 1160 780 1132 740 1104 690 1089 667Q1060 625 1017 600L959 560 867 507 825 487 791 477 710 458 668 447 655 437 552 424 500 415 417 405 300 380 267 368 236 354Z" fill="#fcd6a4" stroke="#b0801c" stroke-width="2.500"/>
    <path d="M910 350H964L934 452 888 428Z" fill="#f6fabf"/>
    <path d="M888 413L872 423 888 430ZM937 445L942 456 930 451ZM878 475L893 476 898 485Z" fill="#dcdce0"/>
    <path d="M942 494L990 529 1100 628 1094 628 1040 580 985 531Z" fill="#fff" stroke="#fff"/><path d="M1100 626L1150 685" stroke="#fff" stroke-width="1.500"/>
    <g fill="none" stroke="#c987a6" stroke-width="3.500"><path d="M325 359L403 375 497 388 634 410 798 430 852 445 904 467" stroke-dasharray="4 6.300"/><path d="M904 467L940 358M904 467L959 500 1036 563 1100 627 1157 697 1186 743 1218 807 1243 867 1273 953 1300 1080 1318 1167" stroke-dasharray="11 6"/></g>
    <g fill="none"><path d="M1145 773L1219 727" stroke="#777" stroke-width="11"/><path d="M1144 774L1220 726" stroke="#f6eeee" stroke-width="7"/><path d="M1144 774L1220 726" stroke="#fa8072" stroke-width="3" stroke-dasharray="5 5"/></g>
    <use href="#signal" x="866" y="404"/><use href="#signal" x="904" y="424"/><use href="#signal" x="952" y="436"/><use href="#signal" x="870" y="490"/>
    <g fill="#4f3400"><use href="#arrow" transform="translate(487 396) rotate(8)"/><use href="#arrow" transform="translate(576 390) rotate(187)"/><use href="#arrow" transform="translate(768 417) rotate(176)"/><use href="#arrow" transform="translate(850 451) rotate(15)"/><use href="#arrow" transform="translate(841 477) rotate(25)"/><use href="#arrow" transform="translate(946.500 378) rotate(-90)"/><use href="#arrow" transform="translate(1130 704) rotate(56)"/><use href="#arrow" transform="translate(1232 816) rotate(-115)"/><use href="#arrow" transform="translate(1264 1022) rotate(77)"/><use href="#arrow" transform="translate(1322 1144) rotate(-102)"/><use href="#arrow" transform="translate(1342 1145) rotate(-108)" fill="#444"/></g>
    <!-- labels -->
    <g class="lbl road" font-size="21.500"><text><textPath href="#b1">Boulevard de la Paix</textPath></text><text class="halo"><textPath href="#b2">Boulevard de la Paix</textPath></text><text><textPath href="#b3">Boulevard de la Paix</textPath></text>
    <text transform="translate(257 361) rotate(11)">a Paix</text><text class="halo" transform="translate(1306 399) rotate(-86)">Avenue</text><text class="halo" x="1508" y="671" font-size="22.500">Rue des</text><text x="1524" y="363" class="halo">des Ab</text></g>
    <g class="lbl" fill="#555" font-size="22"><text x="1571" y="489">Ph</text><text x="1582" y="521">Y</text><text x="1586" y="458">B</text></g>
    <g class="lbl" fill="#b866c4" stroke="#b866c4" stroke-width=".4" font-size="20.500"><text><textPath href="#b4">Attécoubé</textPath></text><text><textPath href="#b5">Adjamé</textPath></text></g>
    <g class="lbl place" font-size="29" text-anchor="middle"><text x="952" y="1106" textLength="132">Opération</text><text x="952" y="1147" textLength="154">des Nations</text><text x="952" y="1188">Univer</text></g>
    <g fill="#0a62a5"><path d="M1130 588h16v26h-16z"/><path d="M1133 592h10v7h-10z" fill="#dfdfdf"/><path d="M1148 590l5 4v16q-3 3-5-1v-8" fill="none" stroke="#0a62a5" stroke-width="2"/></g>
    <!-- editable boundary -->
    <path d="M944 572L1016 598 1090 660 1136 750 804 912 756 970 654 978 656 866 670 832 740 714 830 692 926 646Z" fill="#fe57a1" fill-opacity=".1" stroke="#fe57a1" stroke-opacity=".62" stroke-width="10" stroke-dasharray="20 20" stroke-linecap="round" stroke-linejoin="round"/>
    <g class="mid"><path d="M972 578h16v16h-16zM1044 622h16v16h-16zM1104 698h16v16h-16zM962 824h16v16h-16zM772 932h16v16h-16zM696 966h16v16h-16zM646 914h16v16h-16zM654 840h16v16h-16zM696 764h16v16h-16zM776 696h16v16h-16zM870 660h16v16h-16zM928 600h16v16h-16z"/></g>
    <g class="vtx"><path d="M936 564h16v16h-16zM1008 590h16v16h-16zM1082 652h16v16h-16zM1128 742h16v16h-16zM796 904h16v16h-16zM748 962h16v16h-16zM646 970h16v16h-16zM648 858h16v16h-16zM662 824h16v16h-16zM732 706h16v16h-16zM822 684h16v16h-16zM918 638h16v16h-16z"/></g>
  </svg>
  <div class="tools">
    <div class="bar"><i class="glyph"><svg viewBox="0 0 20 20" width="20" height="20"><path d="M8 0h4v8h8v4h-8v8H8v-8H0V8h8z"/></svg></i><i class="glyph"><svg viewBox="0 0 18 5" width="18" height="5"><path d="M0 0h18v5H0z"/></svg></i></div>
    <div class="bar find"><i class="glyph"><svg viewBox="0 0 28 28" width="28" height="28" fill="none" stroke="#2e2e2e"><circle cx="12.300" cy="12.300" r="10.300" stroke-width="4"/><path d="M19.500 19.500L26.500 26.500" stroke-width="4.500"/></svg></i></div>
    <div class="bar pin"><i class="glyph"><svg viewBox="0 0 18 24" width="18" height="24"><path fill-rule="evenodd" d="M9 24C6.500 18 0 15 0 9a9 9 0 0 1 18 0c0 6-6.500 9-9 15zM9 4.500a4.300 4.300 0 1 0 .1 0z" fill="#555759"/></svg></i></div>
    <div class="bar shapes"><i class="glyph"><svg viewBox="0 0 24 25" width="24" height="25"><path d="M11 0L24 8 22 22.500 7 24.500 0 11.500z" fill="#464646"/></svg></i><i class="glyph"><svg viewBox="0 0 20 20" width="20" height="20"><path d="M0 0h20v20H0z" fill="#464646"/></svg></i></div>
    <div class="bar edit"><i class="glyph"><svg viewBox="0 0 27 27" width="27" height="27" fill="none" stroke="#464646"><path d="M15 5.500H8Q2.500 5.500 2.500 11V19Q2.500 24.500 8 24.500H15Q20.500 24.500 20.500 19V14" stroke-width="3.600"/><path d="M11.500 16.500L20.500 7.500M23 5L25.500 2.500" stroke-width="4.600"/></svg></i><i class="glyph"><svg viewBox="0 0 22 27" width="22" height="27"><path fill-rule="evenodd" d="M0 3.500H6.500V0H15.500V3.500H22V6H0zM8.500 2v1.500h5V2zM2 8H20V27H2zM4 10V25H6V10zM8 10V25H10V10zM12 10V25H14V10zM16 10V25H18V10z" fill="#464646"/></svg></i>
      <div class="actions"><span>Save</span><span>Cancel</span></div></div>
  </div>
  <div class="layers"><svg viewBox="0 0 52 52" width="52" height="52"><path d="M0 34L26 17 52 34 26 51z" fill="#b3b3b3"/><path d="M0 34L26 51 52 34" fill="none" stroke="#777" stroke-width="1.500"/><path d="M0 26L26 9 52 26 26 43z" fill="#ccc"/><path d="M0 26L26 43 52 26" fill="none" stroke="#777" stroke-width="1.500"/><path d="M0 17L26 0 52 17 26 34z" fill="#efefef"/><path d="M6.500 21.500L26 8.500 45.500 21.500 26 34z" fill="#d8d8d8"/><path d="M0 17L26 34 52 17" fill="none" stroke="#666" stroke-width="1.500"/></svg></div>
  <div class="tip"><b>Click cancel to undo changes.</b><span>Drag handles, or marker to edit feature.</span></div>
  <div class="scale">100 m</div>
  <div class="attr"><a>Leaflet</a> | Geocoding by <a>Mapzen</a>, Base map data © <a>OpenStreetMap</a> contributors under <a>ODbL</a></div>
  </div>
  <aside class="panel">
    <h2>EDIT PROJECT BOUNDARY</h2>
    <div class="card">
      <p>Use the tools provided on the left side of<br>the map to update your project boundary.<br>Once complete, select the save button<br>below.</p>
      <div class="alert"><svg viewBox="0 0 28 28" width="28" height="28"><circle cx="14" cy="14" r="13.800" fill="#31708f"/><path d="M11.500 5h5v4h-5zM9.500 11h7v8.500h2.500v3.500H9.500v-3.500H12V14.500H9.500z" fill="#d9edf7"/></svg><span>We encourage you to mark the<br>area in which your project takes<br>place (if your project doesn't<br>include the entire world). This<br>makes interactions simpler and<br>also helps other users to find your<br>project.</span></div>
      <div class="cardfoot"></div>
    </div>
  </aside>
</main>
<footer class="foot-bar"><span class="copy">Copyright 2017 Cadasta. All Rights Reserved.</span><nav><a>About Us</a><a>Privacy</a><a>Terms of Use</a><a>Code of Conduct</a><a>Visit us on Github</a></nav><div class="select">English (en)<svg viewBox="0 0 10 20" width="10" height="20"><path d="M0 8L5 0 10 8zM0 12L5 20 10 12z" fill="#444"/></svg></div></footer>
</div>
</body>
</html>
```
FILE: styles.css
```css
*{box-sizing:border-box}
body{margin:0;width:2302px;height:1256px;background:#17191c;font-family:Roboto,"Liberation Sans",sans-serif;overflow:hidden}
.app{width:2300px;height:1256px;display:flex;flex-direction:column;background:#f3f4f8}
h1,h2,p{margin:0;font-weight:400}
em{font-style:normal}
.caret{display:inline-block;width:0;height:0;border:8px solid transparent;border-top-color:#fff;border-bottom:0}
.caret.pale{border-top-color:#6485d6;margin-left:37px;vertical-align:4px}

.topbar{height:138px;background:#2e51a3;display:flex;flex:none}
.logo{display:flex;width:1150px;padding:55px 0 0 213px;color:#fff;font:900 46px/34px Lato,sans-serif;letter-spacing:-1.4px}
.logo-mark{flex:none;margin-right:11px}
.mainnav{display:flex}
.tab{width:200px;font-size:28px;line-height:153px;height:138px;text-align:center;color:#fff;letter-spacing:.15px}
.tab.active{border-top:12px solid #edaa00;line-height:129px}
.orgs{width:272px;text-align:left;padding-left:48px;color:#d3d9e6}
.help{width:148px;border:solid #3a5eb5;border-width:0 2px;padding:56px 0 0 54px}
.user{color:#eceef4;font-size:26px;line-height:150px;padding-left:53px;letter-spacing:.1px}

.titlebar{height:218px;flex:none;background:#0e305d;display:flex;color:#fff;font-size:28px}
.titles{width:1520px;padding:48px 0 0 48px;font-family:"Roboto Condensed",Roboto,sans-serif;font-stretch:75%;text-shadow:0 2px 2px rgba(0,0,0,.3)}
.org{font-size:31.500px;line-height:40px;color:#a3b9ec;white-space:nowrap;letter-spacing:-.13px}
h1{font-size:72px;line-height:80px;margin-top:2px;letter-spacing:-.5px;white-space:nowrap}
.btn{height:66px;margin-top:74px;background:#00b38a;border:2px solid #009b77;border-radius:8px;display:flex}
.btn em{margin-top:2px}
.split{width:312px}
.main{width:243px;padding-left:24px;display:flex;align-items:center}
.main svg{margin-right:10px}
.drop{border-left:2px solid #009b77;flex:1;display:flex;justify-content:center;align-items:center;padding-top:4px}
.more{width:200px;margin-left:28px;padding-left:55px;align-items:center}
.more .caret{margin:5px 0 0 6px}
.lang{margin:87px 0 0 36px;line-height:40px;height:40px;width:144px;padding-top:4px}
.lang .caret{margin-left:16px;vertical-align:7px;border-width:9px 8px 0}
.qmark{width:40px;height:40px;border-radius:50%;background:#00b38a;margin-top:88px;text-align:center;font:700 22px/41px Roboto,sans-serif;color:#d9f4ec}

.body{height:840px;flex:none;display:flex;border-top:2px solid #fff;border-bottom:2px solid #e4e6ea}
.side{width:200px;height:836px;overflow:hidden;background:#0b2547}
.item{display:flex;flex-direction:column;align-items:center;height:168px;border-left:14px solid #0b2547;box-shadow:inset 0 -2px #0b2549;padding-top:30px;background:#0e305d;color:#9fb5e9;font-size:22px;line-height:26px;letter-spacing:.2px}
.item svg{flex:none}
.item span{margin-top:20px}
.item.on{border-left-color:#edaa00;color:#fff}

.map{position:relative;width:1390px;height:836px;overflow:hidden;background:#dfdfdf}
.map::after{content:"";position:absolute;inset:0;box-shadow:inset 0 0 10px rgba(0,0,0,.3);clip-path:inset(8px 0);pointer-events:none}
.tiles{display:block}
.c3{transform:translate(0,350px) scale(.33333)}
.c4{transform:translate(0,760px) scale(.44643,.33333)}
.c5{transform:translate(500px,350px) scale(.38265,.33333)}
.c6{transform:translate(1050px,350px) scale(.35714,.33333)}
.c7{transform:translate(600px,780px) scale(.34439,.33333)}
.c8{transform:translate(1100px,780px) scale(.33333)}
.bld path{fill:#d9d0c9;stroke:#c5b4a8;stroke-width:1.6px;vector-effect:non-scaling-stroke}
.bld .rb path{fill:#dfc3be;stroke:#cbaaa5}
#paths path{fill:none;vector-effect:non-scaling-stroke}
.foot{stroke:#f5ecec;stroke-opacity:.75;stroke-width:5.5px}
.foot-dots{stroke:#fb8577;stroke-width:2.8px;stroke-dasharray:5.5px 5px}
.street path{fill:none;stroke:#fff;stroke-linecap:round;stroke-linejoin:round}
.street.casing path{stroke:#c4c4c4}
.lbl{font-family:"Noto Sans","DejaVu Sans",sans-serif}
.road{fill:#1c1c1c;stroke:#1c1c1c;stroke-width:.4px}
.lbl .halo{paint-order:stroke;stroke:#fff;stroke-width:4px;stroke-opacity:.8}
.place{font-style:italic;fill:#921a22;paint-order:stroke;stroke:rgba(255,255,255,.5);stroke-width:3px}
.vtx path,.mid path{fill:#fff;stroke:#666;stroke-width:3px}
.mid{opacity:.6}

.tools{position:absolute;left:20px;top:20px;width:52px}
.bar{width:52px;background:#fff;border-radius:8px;box-shadow:0 2px 8px rgba(0,0,0,.55);position:relative}
.glyph{display:flex;height:52px;align-items:center;justify-content:center}
.glyph+.glyph{border-top:2px solid #ccc;margin-top:-2px;height:54px}
.find,.pin,.shapes{margin-top:20px}
.pin{width:50px}
.pin .glyph{height:50px}
.edit{margin-top:24px}
.actions{position:absolute;left:52px;top:0;display:flex;width:200px;height:54px;background:#919187;border-radius:0 8px 8px 0;color:#fff;font:22px/54px "Liberation Sans",sans-serif;text-align:center}
.actions span{flex:1}
.actions span:first-child{flex:none;width:90px;border-right:2px solid #b0b0aa}
.layers{position:absolute;left:1298px;top:20px;width:72px;height:72px;border-radius:10px;background:#fff;box-shadow:0 2px 8px rgba(0,0,0,.45);padding:11px 10px}
.tip{position:absolute;left:898px;top:224px;width:458px;height:92px;border-radius:8px;background:rgba(0,0,0,.5);color:#fff;font:24px/36px "Liberation Sans",sans-serif;letter-spacing:.05px;padding:10px 0 0 18px;white-space:nowrap}
.tip::before{content:"";position:absolute;left:-11px;top:16px;border:12px solid transparent;border-right:11px solid rgba(0,0,0,.5);border-left:0}
.tip b{display:block;font-weight:400;color:#f6cfe0;letter-spacing:.2px}
.scale{position:absolute;left:10px;top:792px;width:176px;height:34px;border:4px solid #777;border-top:0;background:rgba(255,255,255,.5);color:#333;font-size:22px;line-height:33px;padding-left:10px}
.attr{position:absolute;right:0;bottom:0;height:32px;width:914px;background:rgba(255,255,255,.7);padding-left:11px;font-size:22px;line-height:34px;letter-spacing:.11px;color:#333;white-space:nowrap}
.attr a{color:#0078a8}

.panel{width:710px;padding:50px 48px 0;height:836px;overflow:hidden;background:#f3f4f8}
h2{width:420px;font:400 60px/66px "Roboto Condensed",Roboto,sans-serif;font-stretch:75%;letter-spacing:-.4px;color:#0e305d}
.card{margin-top:30px;width:614px;height:700px;background:#fff;border:2px solid #e7e8ec;border-radius:8px;padding-top:32px;font-size:28px;line-height:38px;letter-spacing:.18px;color:#555}
.card p{padding-left:30px;white-space:nowrap}
.alert{margin:18px 30px 0 30px;width:549px;height:338px;border:2px solid #bce8f1;border-radius:8px;background:#d9edf7;color:#31708f;padding:36px 0 0 35px;display:flex;white-space:nowrap}
.alert svg{margin:2px 8px 0 0}
.cardfoot{margin-top:70px;height:60px;border-top:2px solid #dfe1e5;background:#f8f9fb}

.foot-bar{height:60px;flex:none;display:flex;font-size:22px;line-height:49px;letter-spacing:.13px;color:#555;border-bottom:2px solid #b6b6ba}
.copy{width:1061px;padding-left:30px}
.foot-bar nav{display:flex;gap:63.400px;color:#2e51a3;width:947px;white-space:nowrap}
.select{width:262px;height:36px;margin-top:8px;border:2px solid #bbb;border-radius:8px;background:#fff;line-height:37px;padding-left:16px;display:flex;letter-spacing:0}
.select svg{margin:5px 0 0 109px}
```
